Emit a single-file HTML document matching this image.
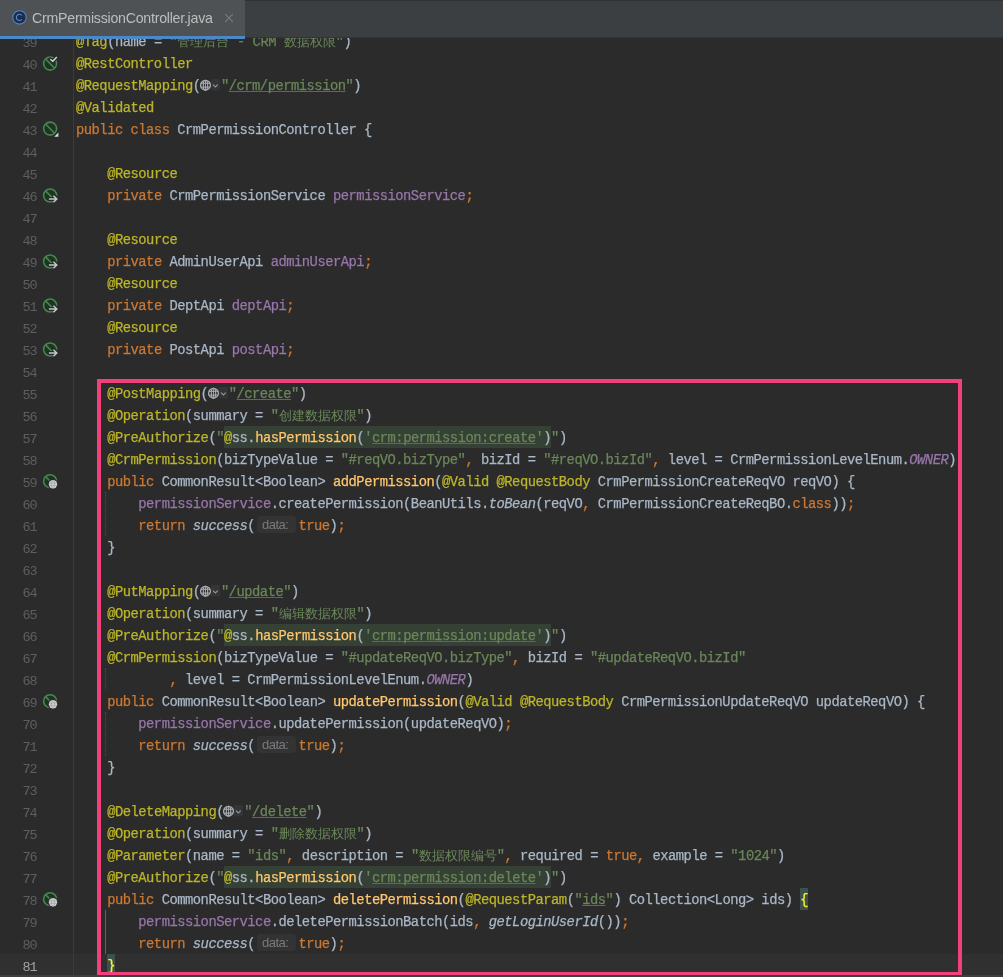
<!DOCTYPE html><html><head><meta charset="utf-8"><style>
*{margin:0;padding:0;box-sizing:border-box}
html,body{width:1003px;height:977px;overflow:hidden;background:#2b2b2b}
body{position:relative;font-family:"Liberation Mono",monospace}
#tabs{position:absolute;left:0;top:0;width:1003px;height:38px;background:#3c3f41;border-top:1px solid #2f3133;border-bottom:1px solid #323436;z-index:5}
#tab{position:absolute;left:0;top:0;width:245px;height:39px;background:#4e5254;z-index:6}
#tab .ul{position:absolute;left:0;bottom:0;width:245px;height:3.5px;background:#4a88c7}
#tab .lbl{position:absolute;left:32.3px;top:9px;font:14.2px/18px "Liberation Sans",sans-serif;letter-spacing:-0.25px;color:#bdbdbd;white-space:nowrap;will-change:transform}
#tab .x{position:absolute;left:224px;top:13px}
#tab .ic{position:absolute;left:11.6px;top:10.2px}
.cur{position:absolute;left:0;top:954px;width:1003px;height:22px;background:#303030}
.bot{position:absolute;left:0;top:975px;width:1003px;height:2px;background:#3c3f41}
.sep{position:absolute;left:73px;top:0;width:1px;height:977px;background:#393b3c}
.num{position:absolute;left:0;width:36.8px;text-align:right;font-size:13.5px;letter-spacing:-0.9px;line-height:22px;color:#606366;padding-top:2.6px;will-change:transform}
.code{position:absolute;left:76.1px;height:22px;font-size:13.8px;line-height:22px;white-space:pre;color:#a9b7c6;padding-top:1.5px;letter-spacing:-0.4924px;-webkit-text-stroke:0.25px currentColor;will-change:transform}
.cjk{font-size:13px;letter-spacing:0;-webkit-text-stroke:0}
.ann{color:#bbb529} .t{color:#a9b7c6} .s{color:#6a8759} .k{color:#cc7832} .f{color:#9876aa} .m{color:#ffc66d}
.ti{color:#a9b7c6;font-style:italic} .fi{color:#9876aa;font-style:italic}
.su{color:#6a8759;text-decoration:underline;text-decoration-color:#58667a;text-underline-offset:0.6px;text-decoration-skip-ink:none}
.inj{background:#364135;display:inline-block;height:22px;vertical-align:top;margin-top:-1.5px;padding-top:1.5px}
.brace{color:#ffef28;background:#3b514d;display:inline-block;height:22px;line-height:22px;vertical-align:top;margin-top:-1.5px;padding-top:1.5px}
.gl{display:inline-block;width:20.3px;height:22px;vertical-align:top;margin-top:-1.5px;position:relative;-webkit-text-stroke:0}
.gl svg{position:absolute;left:-0.8px;top:0}
.dh{display:inline-block;width:43.3px;height:22px;vertical-align:top;margin-top:-1.5px;position:relative}
.dh span{position:absolute;left:1.5px;top:1.5px;width:39.2px;height:17.5px;background:#333333;border-radius:3px;font:13px/18px "Liberation Sans",sans-serif;color:#787b7e;padding-left:5.3px;-webkit-text-stroke:0}
.guide{position:absolute;width:1px;border-left:1px dotted #4a4a4a}
.box{position:absolute;left:97px;top:378.5px;width:865px;height:597px;border:4px solid #f43f7e}
.gi{position:absolute;left:41px}
</style></head><body><div id="tabs"></div><div id="tab"><svg class="ic" width="15" height="15" viewBox="0 0 15 15"><circle cx="7.5" cy="7.4" r="6.7" fill="#1e2c4c" stroke="#4d88cc" stroke-width="1.05"/><path d="M9.9 5.5 A3.1 3.1 0 1 0 9.9 9.3" stroke="#5a90d0" stroke-width="1.05" fill="none"/></svg><span class="lbl">CrmPermissionController.java</span><svg class="x" width="10" height="10" viewBox="0 0 10 10"><path d="M1.2 1.2 L8.8 8.8 M8.8 1.2 L1.2 8.8" stroke="#797c7f" stroke-width="1.1"/></svg><div class="ul"></div></div><div class="cur"></div><div class="sep"></div><div class="num" style="top:30px;color:#5c5f62">39</div><div class="code" style="top:30px"><span class="ann">@Tag</span><span class="t">(name = </span><span class="s">&quot;<span class="cjk">管理后台</span> - CRM <span class="cjk">数据权限</span>&quot;</span><span class="t">)</span></div><div class="num" style="top:52px;color:#5c5f62">40</div><div class="code" style="top:52px"><span class="ann">@RestController</span></div><div class="num" style="top:74px;color:#5c5f62">41</div><div class="code" style="top:74px"><span class="ann">@RequestMapping</span><span class="t">(</span><span class="gl"><svg width="22" height="22" viewBox="0 0 22 22"><rect x="10.9" y="5" width="9" height="11.5" rx="1" fill="#333537"/><g stroke="#a8adb2" fill="none"><circle cx="5.5" cy="11.2" r="4.9" stroke-width="1.3"/><ellipse cx="5.5" cy="11.2" rx="2.2" ry="4.9" stroke-width="1.1"/><line x1="5.5" y1="6.3" x2="5.5" y2="16.1" stroke-width="0.9"/><line x1="0.9" y1="9.3" x2="10.1" y2="9.3" stroke-width="1.1"/><line x1="0.9" y1="13.1" x2="10.1" y2="13.1" stroke-width="1.1"/></g><path d="M13 10.6 L15.4 13 L17.8 10.6" stroke="#8f959b" stroke-width="1.2" fill="none"/></svg></span><span class="s">&quot;</span><span class="su">/crm/permission</span><span class="s">&quot;</span><span class="t">)</span></div><div class="num" style="top:96px;color:#5c5f62">42</div><div class="code" style="top:96px"><span class="ann">@Validated</span></div><div class="num" style="top:118px;color:#5c5f62">43</div><div class="code" style="top:118px"><span class="k">public class </span><span class="t">CrmPermissionController {</span></div><div class="num" style="top:140px;color:#5c5f62">44</div><div class="num" style="top:162px;color:#5c5f62">45</div><div class="code" style="top:162px">    <span class="ann">@Resource</span></div><div class="num" style="top:184px;color:#5c5f62">46</div><div class="code" style="top:184px">    <span class="k">private </span><span class="t">CrmPermissionService </span><span class="f">permissionService</span><span class="k">;</span></div><div class="num" style="top:206px;color:#5c5f62">47</div><div class="num" style="top:228px;color:#5c5f62">48</div><div class="code" style="top:228px">    <span class="ann">@Resource</span></div><div class="num" style="top:250px;color:#5c5f62">49</div><div class="code" style="top:250px">    <span class="k">private </span><span class="t">AdminUserApi </span><span class="f">adminUserApi</span><span class="k">;</span></div><div class="num" style="top:272px;color:#5c5f62">50</div><div class="code" style="top:272px">    <span class="ann">@Resource</span></div><div class="num" style="top:294px;color:#5c5f62">51</div><div class="code" style="top:294px">    <span class="k">private </span><span class="t">DeptApi </span><span class="f">deptApi</span><span class="k">;</span></div><div class="num" style="top:316px;color:#5c5f62">52</div><div class="code" style="top:316px">    <span class="ann">@Resource</span></div><div class="num" style="top:338px;color:#5c5f62">53</div><div class="code" style="top:338px">    <span class="k">private </span><span class="t">PostApi </span><span class="f">postApi</span><span class="k">;</span></div><div class="num" style="top:360px;color:#5c5f62">54</div><div class="num" style="top:382px;color:#5c5f62">55</div><div class="code" style="top:382px">    <span class="ann">@PostMapping</span><span class="t">(</span><span class="gl"><svg width="22" height="22" viewBox="0 0 22 22"><rect x="10.9" y="5" width="9" height="11.5" rx="1" fill="#333537"/><g stroke="#a8adb2" fill="none"><circle cx="5.5" cy="11.2" r="4.9" stroke-width="1.3"/><ellipse cx="5.5" cy="11.2" rx="2.2" ry="4.9" stroke-width="1.1"/><line x1="5.5" y1="6.3" x2="5.5" y2="16.1" stroke-width="0.9"/><line x1="0.9" y1="9.3" x2="10.1" y2="9.3" stroke-width="1.1"/><line x1="0.9" y1="13.1" x2="10.1" y2="13.1" stroke-width="1.1"/></g><path d="M13 10.6 L15.4 13 L17.8 10.6" stroke="#8f959b" stroke-width="1.2" fill="none"/></svg></span><span class="s">&quot;</span><span class="su">/create</span><span class="s">&quot;</span><span class="t">)</span></div><div class="num" style="top:404px;color:#5c5f62">56</div><div class="code" style="top:404px">    <span class="ann">@Operation</span><span class="t">(summary = </span><span class="s">&quot;<span class="cjk">创建数据权限</span>&quot;</span><span class="t">)</span></div><div class="num" style="top:426px;color:#5c5f62">57</div><div class="code" style="top:426px">    <span class="ann">@PreAuthorize</span><span class="t">(</span><span class="s">&quot;</span><span class="inj"><span class="ann">@</span><span class="t">ss.</span><span class="m">hasPermission</span><span class="t">(</span><span class="s">&#x27;</span><span class="su">crm:permission:create</span><span class="s">&#x27;</span><span class="t">)</span></span><span class="s">&quot;</span><span class="t">)</span></div><div class="num" style="top:448px;color:#5c5f62">58</div><div class="code" style="top:448px">    <span class="ann">@CrmPermission</span><span class="t">(bizTypeValue = </span><span class="s">&quot;#reqVO.bizType&quot;</span><span class="k">, </span><span class="t">bizId = </span><span class="s">&quot;#reqVO.bizId&quot;</span><span class="k">, </span><span class="t">level = CrmPermissionLevelEnum.</span><span class="fi">OWNER</span><span class="t">)</span></div><div class="num" style="top:470px;color:#5c5f62">59</div><div class="code" style="top:470px">    <span class="k">public </span><span class="t">CommonResult&lt;Boolean&gt; </span><span class="m">addPermission</span><span class="t">(</span><span class="ann">@Valid @RequestBody </span><span class="t">CrmPermissionCreateReqVO reqVO) {</span></div><div class="num" style="top:492px;color:#5c5f62">60</div><div class="code" style="top:492px">        <span class="f">permissionService</span><span class="t">.createPermission(BeanUtils.</span><span class="ti">toBean</span><span class="t">(reqVO</span><span class="k">, </span><span class="t">CrmPermissionCreateReqBO.</span><span class="k">class</span><span class="t">))</span><span class="k">;</span></div><div class="num" style="top:514px;color:#5c5f62">61</div><div class="code" style="top:514px">        <span class="k">return </span><span class="ti">success</span><span class="t">(</span><span class="dh"><span>data:</span></span><span class="k">true</span><span class="t">)</span><span class="k">;</span></div><div class="num" style="top:536px;color:#5c5f62">62</div><div class="code" style="top:536px">    <span class="t">}</span></div><div class="num" style="top:558px;color:#5c5f62">63</div><div class="num" style="top:580px;color:#5c5f62">64</div><div class="code" style="top:580px">    <span class="ann">@PutMapping</span><span class="t">(</span><span class="gl"><svg width="22" height="22" viewBox="0 0 22 22"><rect x="10.9" y="5" width="9" height="11.5" rx="1" fill="#333537"/><g stroke="#a8adb2" fill="none"><circle cx="5.5" cy="11.2" r="4.9" stroke-width="1.3"/><ellipse cx="5.5" cy="11.2" rx="2.2" ry="4.9" stroke-width="1.1"/><line x1="5.5" y1="6.3" x2="5.5" y2="16.1" stroke-width="0.9"/><line x1="0.9" y1="9.3" x2="10.1" y2="9.3" stroke-width="1.1"/><line x1="0.9" y1="13.1" x2="10.1" y2="13.1" stroke-width="1.1"/></g><path d="M13 10.6 L15.4 13 L17.8 10.6" stroke="#8f959b" stroke-width="1.2" fill="none"/></svg></span><span class="s">&quot;</span><span class="su">/update</span><span class="s">&quot;</span><span class="t">)</span></div><div class="num" style="top:602px;color:#5c5f62">65</div><div class="code" style="top:602px">    <span class="ann">@Operation</span><span class="t">(summary = </span><span class="s">&quot;<span class="cjk">编辑数据权限</span>&quot;</span><span class="t">)</span></div><div class="num" style="top:624px;color:#5c5f62">66</div><div class="code" style="top:624px">    <span class="ann">@PreAuthorize</span><span class="t">(</span><span class="s">&quot;</span><span class="inj"><span class="ann">@</span><span class="t">ss.</span><span class="m">hasPermission</span><span class="t">(</span><span class="s">&#x27;</span><span class="su">crm:permission:update</span><span class="s">&#x27;</span><span class="t">)</span></span><span class="s">&quot;</span><span class="t">)</span></div><div class="num" style="top:646px;color:#5c5f62">67</div><div class="code" style="top:646px">    <span class="ann">@CrmPermission</span><span class="t">(bizTypeValue = </span><span class="s">&quot;#updateReqVO.bizType&quot;</span><span class="k">, </span><span class="t">bizId = </span><span class="s">&quot;#updateReqVO.bizId&quot;</span></div><div class="num" style="top:668px;color:#5c5f62">68</div><div class="code" style="top:668px">            <span class="k">, </span><span class="t">level = CrmPermissionLevelEnum.</span><span class="fi">OWNER</span><span class="t">)</span></div><div class="num" style="top:690px;color:#5c5f62">69</div><div class="code" style="top:690px">    <span class="k">public </span><span class="t">CommonResult&lt;Boolean&gt; </span><span class="m">updatePermission</span><span class="t">(</span><span class="ann">@Valid @RequestBody </span><span class="t">CrmPermissionUpdateReqVO updateReqVO) {</span></div><div class="num" style="top:712px;color:#5c5f62">70</div><div class="code" style="top:712px">        <span class="f">permissionService</span><span class="t">.updatePermission(updateReqVO)</span><span class="k">;</span></div><div class="num" style="top:734px;color:#5c5f62">71</div><div class="code" style="top:734px">        <span class="k">return </span><span class="ti">success</span><span class="t">(</span><span class="dh"><span>data:</span></span><span class="k">true</span><span class="t">)</span><span class="k">;</span></div><div class="num" style="top:756px;color:#5c5f62">72</div><div class="code" style="top:756px">    <span class="t">}</span></div><div class="num" style="top:778px;color:#5c5f62">73</div><div class="num" style="top:800px;color:#5c5f62">74</div><div class="code" style="top:800px">    <span class="ann">@DeleteMapping</span><span class="t">(</span><span class="gl"><svg width="22" height="22" viewBox="0 0 22 22"><rect x="10.9" y="5" width="9" height="11.5" rx="1" fill="#333537"/><g stroke="#a8adb2" fill="none"><circle cx="5.5" cy="11.2" r="4.9" stroke-width="1.3"/><ellipse cx="5.5" cy="11.2" rx="2.2" ry="4.9" stroke-width="1.1"/><line x1="5.5" y1="6.3" x2="5.5" y2="16.1" stroke-width="0.9"/><line x1="0.9" y1="9.3" x2="10.1" y2="9.3" stroke-width="1.1"/><line x1="0.9" y1="13.1" x2="10.1" y2="13.1" stroke-width="1.1"/></g><path d="M13 10.6 L15.4 13 L17.8 10.6" stroke="#8f959b" stroke-width="1.2" fill="none"/></svg></span><span class="s">&quot;</span><span class="su">/delete</span><span class="s">&quot;</span><span class="t">)</span></div><div class="num" style="top:822px;color:#5c5f62">75</div><div class="code" style="top:822px">    <span class="ann">@Operation</span><span class="t">(summary = </span><span class="s">&quot;<span class="cjk">删除数据权限</span>&quot;</span><span class="t">)</span></div><div class="num" style="top:844px;color:#5c5f62">76</div><div class="code" style="top:844px">    <span class="ann">@Parameter</span><span class="t">(name = </span><span class="s">&quot;ids&quot;</span><span class="k">, </span><span class="t">description = </span><span class="s">&quot;<span class="cjk">数据权限编号</span>&quot;</span><span class="k">, </span><span class="t">required = </span><span class="k">true, </span><span class="t">example = </span><span class="s">&quot;1024&quot;</span><span class="t">)</span></div><div class="num" style="top:866px;color:#5c5f62">77</div><div class="code" style="top:866px">    <span class="ann">@PreAuthorize</span><span class="t">(</span><span class="s">&quot;</span><span class="inj"><span class="ann">@</span><span class="t">ss.</span><span class="m">hasPermission</span><span class="t">(</span><span class="s">&#x27;</span><span class="su">crm:permission:delete</span><span class="s">&#x27;</span><span class="t">)</span></span><span class="s">&quot;</span><span class="t">)</span></div><div class="num" style="top:888px;color:#5c5f62">78</div><div class="code" style="top:888px">    <span class="k">public </span><span class="t">CommonResult&lt;Boolean&gt; </span><span class="m">deletePermission</span><span class="t">(</span><span class="ann">@RequestParam</span><span class="t">(</span><span class="s">&quot;</span><span class="su">ids</span><span class="s">&quot;</span><span class="t">) Collection&lt;Long&gt; ids) </span><span class="brace">{</span></div><div class="num" style="top:910px;color:#5c5f62">79</div><div class="code" style="top:910px">        <span class="f">permissionService</span><span class="t">.deletePermissionBatch(ids</span><span class="k">, </span><span class="ti">getLoginUserId</span><span class="t">())</span><span class="k">;</span></div><div class="num" style="top:932px;color:#5c5f62">80</div><div class="code" style="top:932px">        <span class="k">return </span><span class="ti">success</span><span class="t">(</span><span class="dh"><span>data:</span></span><span class="k">true</span><span class="t">)</span><span class="k">;</span></div><div class="num" style="top:954px;color:#a4a3a3">81</div><div class="code" style="top:954px">    <span class="brace">}</span></div><svg class="gi" style="top:52px" width="20" height="22" viewBox="0 0 20 22"><circle cx="9.1" cy="11.6" r="6.5" fill="#1f3323" stroke="#47874f" stroke-width="1.6"/><line x1="4.5" y1="7.0" x2="13.7" y2="16.2" stroke="#47874f" stroke-width="1.6"/><path d="M9.3 7.199999999999999 L11.8 9.3 L15.8 5.1" stroke="#2b2b2b" stroke-width="3.6" fill="none" stroke-linecap="round"/><path d="M9.3 7.199999999999999 L11.8 9.3 L15.8 5.1" stroke="#d4d6d8" stroke-width="1.5" fill="none"/></svg><svg class="gi" style="top:118px" width="20" height="22" viewBox="0 0 20 22"><circle cx="9.1" cy="10.6" r="6.5" fill="#1f3323" stroke="#47874f" stroke-width="1.6"/><line x1="4.5" y1="6.0" x2="13.7" y2="15.2" stroke="#47874f" stroke-width="1.6"/><path d="M12.2 19.2 L18.4 19.2 L18.4 13.0 Z" fill="#2b2b2b" stroke="#2b2b2b" stroke-width="2"/><path d="M13.2 18.7 L17.4 18.7 L17.4 14.5 Z" fill="#d9dbdd"/></svg><svg class="gi" style="top:184px" width="20" height="22" viewBox="0 0 20 22"><circle cx="9.1" cy="11.5" r="6.5" fill="#1f3323" stroke="#47874f" stroke-width="1.6"/><line x1="4.5" y1="6.9" x2="13.7" y2="16.1" stroke="#47874f" stroke-width="1.6"/><path d="M7.6 15.0 L16.4 15.0 M12.6 11.5 L16.2 15.0 L12.6 18.5" stroke="#2b2b2b" stroke-width="4" fill="none"/><path d="M7.9 15.0 L15.6 15.0 M12.4 11.7 L15.8 15.0 L12.4 18.3" stroke="#c4c8cc" stroke-width="1.5" fill="none"/></svg><svg class="gi" style="top:250px" width="20" height="22" viewBox="0 0 20 22"><circle cx="9.1" cy="11.5" r="6.5" fill="#1f3323" stroke="#47874f" stroke-width="1.6"/><line x1="4.5" y1="6.9" x2="13.7" y2="16.1" stroke="#47874f" stroke-width="1.6"/><path d="M7.6 15.0 L16.4 15.0 M12.6 11.5 L16.2 15.0 L12.6 18.5" stroke="#2b2b2b" stroke-width="4" fill="none"/><path d="M7.9 15.0 L15.6 15.0 M12.4 11.7 L15.8 15.0 L12.4 18.3" stroke="#c4c8cc" stroke-width="1.5" fill="none"/></svg><svg class="gi" style="top:294px" width="20" height="22" viewBox="0 0 20 22"><circle cx="9.1" cy="11.5" r="6.5" fill="#1f3323" stroke="#47874f" stroke-width="1.6"/><line x1="4.5" y1="6.9" x2="13.7" y2="16.1" stroke="#47874f" stroke-width="1.6"/><path d="M7.6 15.0 L16.4 15.0 M12.6 11.5 L16.2 15.0 L12.6 18.5" stroke="#2b2b2b" stroke-width="4" fill="none"/><path d="M7.9 15.0 L15.6 15.0 M12.4 11.7 L15.8 15.0 L12.4 18.3" stroke="#c4c8cc" stroke-width="1.5" fill="none"/></svg><svg class="gi" style="top:338px" width="20" height="22" viewBox="0 0 20 22"><circle cx="9.1" cy="11.5" r="6.5" fill="#1f3323" stroke="#47874f" stroke-width="1.6"/><line x1="4.5" y1="6.9" x2="13.7" y2="16.1" stroke="#47874f" stroke-width="1.6"/><path d="M7.6 15.0 L16.4 15.0 M12.6 11.5 L16.2 15.0 L12.6 18.5" stroke="#2b2b2b" stroke-width="4" fill="none"/><path d="M7.9 15.0 L15.6 15.0 M12.4 11.7 L15.8 15.0 L12.4 18.3" stroke="#c4c8cc" stroke-width="1.5" fill="none"/></svg><svg class="gi" style="top:470px" width="20" height="22" viewBox="0 0 20 22"><circle cx="9.1" cy="11.2" r="6.5" fill="#1f3323" stroke="#47874f" stroke-width="1.6"/><line x1="4.5" y1="6.6" x2="13.7" y2="15.799999999999999" stroke="#47874f" stroke-width="1.6"/><circle cx="12" cy="14.2" r="5.4" fill="#2b2b2b"/><circle cx="12" cy="14.2" r="4.2" fill="#cfd1d3"/><g stroke="#9fa2a5" stroke-width="0.7" fill="none"><ellipse cx="12" cy="14.2" rx="1.6" ry="4"/><line x1="8" y1="13.0" x2="16" y2="13.0"/><line x1="8" y1="15.399999999999999" x2="16" y2="15.399999999999999"/></g></svg><svg class="gi" style="top:690px" width="20" height="22" viewBox="0 0 20 22"><circle cx="9.1" cy="11.2" r="6.5" fill="#1f3323" stroke="#47874f" stroke-width="1.6"/><line x1="4.5" y1="6.6" x2="13.7" y2="15.799999999999999" stroke="#47874f" stroke-width="1.6"/><circle cx="12" cy="14.2" r="5.4" fill="#2b2b2b"/><circle cx="12" cy="14.2" r="4.2" fill="#cfd1d3"/><g stroke="#9fa2a5" stroke-width="0.7" fill="none"><ellipse cx="12" cy="14.2" rx="1.6" ry="4"/><line x1="8" y1="13.0" x2="16" y2="13.0"/><line x1="8" y1="15.399999999999999" x2="16" y2="15.399999999999999"/></g></svg><svg class="gi" style="top:888px" width="20" height="22" viewBox="0 0 20 22"><circle cx="9.1" cy="11.2" r="6.5" fill="#1f3323" stroke="#47874f" stroke-width="1.6"/><line x1="4.5" y1="6.6" x2="13.7" y2="15.799999999999999" stroke="#47874f" stroke-width="1.6"/><circle cx="12" cy="14.2" r="5.4" fill="#2b2b2b"/><circle cx="12" cy="14.2" r="4.2" fill="#cfd1d3"/><g stroke="#9fa2a5" stroke-width="0.7" fill="none"><ellipse cx="12" cy="14.2" rx="1.6" ry="4"/><line x1="8" y1="13.0" x2="16" y2="13.0"/><line x1="8" y1="15.399999999999999" x2="16" y2="15.399999999999999"/></g></svg><div class="guide" style="left:105px;top:492px;height:44px"></div><div class="guide" style="left:105px;top:668px;height:22px"></div><div class="guide" style="left:105px;top:712px;height:44px"></div><div style="position:absolute;left:105px;top:910px;width:1px;height:44px;background:#56656c"></div><div class="box"></div><div class="bot"></div></body></html>
